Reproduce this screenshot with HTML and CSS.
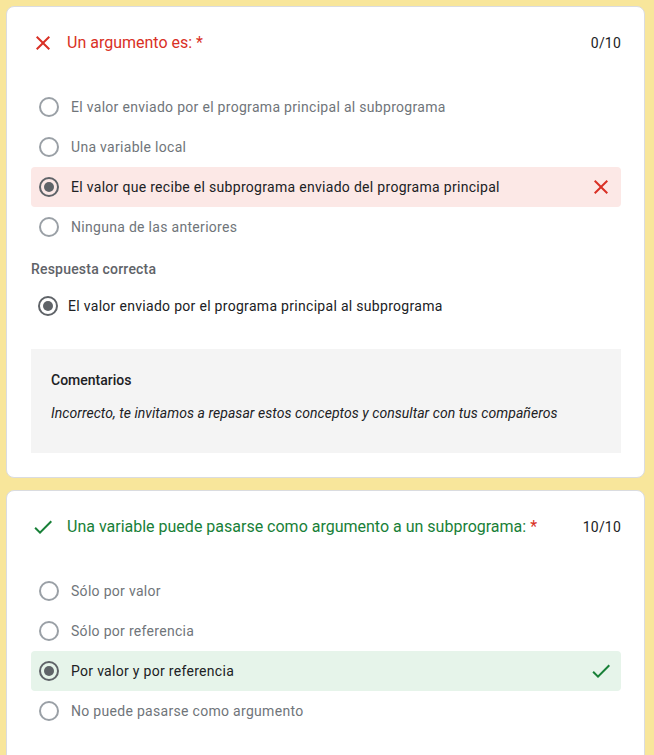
FILE: index.html
```html
<!DOCTYPE html>
<html lang="es">
<head>
<meta charset="utf-8">
<link rel="stylesheet" href="styles.css">
</head>
<body>
<div class="card">
  <div class="q-head">
    <svg class="q-icon" viewBox="0 0 24 24" width="24" height="24"><path fill="#d93025" d="M19 6.41L17.59 5 12 10.59 6.41 5 5 6.41 10.59 12 5 17.59 6.41 19 12 13.41 17.59 19 19 17.59 13.41 12z"/></svg>
    <div class="q-title wrong">Un argumento es: <span class="req">*</span></div>
    <div class="score">0/10</div>
  </div>
  <div class="options">
    <div class="opt"><span class="radio"></span><span class="label">El valor enviado por el programa principal al subprograma</span></div>
    <div class="opt"><span class="radio"></span><span class="label">Una variable local</span></div>
    <div class="opt sel bad"><span class="radio on"></span><span class="label">El valor que recibe el subprograma enviado del programa principal</span>
      <svg class="mark" viewBox="0 0 24 24" width="24" height="24"><path fill="#d93025" d="M19 6.41L17.59 5 12 10.59 6.41 5 5 6.41 10.59 12 5 17.59 6.41 19 12 13.41 17.59 19 19 17.59 13.41 12z"/></svg></div>
    <div class="opt"><span class="radio"></span><span class="label">Ninguna de las anteriores</span></div>
  </div>
  <div class="correct-label">Respuesta correcta</div>
  <div class="opt answer"><span class="radio on"></span><span class="label">El valor enviado por el programa principal al subprograma</span></div>
  <div class="feedback">
    <div class="fb-title">Comentarios</div>
    <div class="fb-text">Incorrecto, te invitamos a repasar estos conceptos y consultar con tus compañeros</div>
  </div>
</div>

<div class="card">
  <div class="q-head">
    <svg class="q-icon" viewBox="0 0 24 24" width="24" height="24"><path fill="#188038" d="M9 16.17L4.83 12l-1.42 1.41L9 19 21 7l-1.41-1.41z"/></svg>
    <div class="q-title right">Una variable puede pasarse como argumento a un subprograma: <span class="req">*</span></div>
    <div class="score">10/10</div>
  </div>
  <div class="options">
    <div class="opt"><span class="radio"></span><span class="label">Sólo por valor</span></div>
    <div class="opt"><span class="radio"></span><span class="label">Sólo por referencia</span></div>
    <div class="opt sel good"><span class="radio on"></span><span class="label">Por valor y por referencia</span>
      <svg class="mark" viewBox="0 0 24 24" width="24" height="24"><path fill="#188038" d="M9 16.17L4.83 12l-1.42 1.41L9 19 21 7l-1.41-1.41z"/></svg></div>
    <div class="opt"><span class="radio"></span><span class="label">No puede pasarse como argumento</span></div>
  </div>
  <div class="spacer"></div>
</div>
</body>
</html>
```
FILE: styles.css
```css
* { box-sizing: border-box; }
html, body { margin: 0; padding: 0; }
body {
  background: #f8e69b;
  font-family: Roboto, "Liberation Sans", Arial, sans-serif;
  color: #202124;
  padding-top: 6px;
  overflow: hidden;
  height: 755px;
}
.card {
  background: #fff;
  border: 1px solid #dadce0;
  border-radius: 8px;
  margin: 0 9px 12px 6px;
  padding: 24px 23px 24px 24px;
}
.q-head {
  display: flex;
  align-items: center;
  height: 24px;
}
.q-icon { flex: none; display: block; }
.q-title {
  flex: 1;
  margin-left: 12px;
  font-size: 16px;
  letter-spacing: 0;
  line-height: 24px;
}
.q-title.wrong { color: #d93025; }
.q-title.right { color: #188038; }
.req { color: #d93025; }
.score {
  font-size: 14px;
  color: #202124;
  letter-spacing: 0.2px;
}
.options { margin-top: 32px; }
.opt {
  display: flex;
  align-items: center;
  height: 40px;
  padding-left: 8px;
  padding-right: 8px;
  border-radius: 4px;
}
.radio {
  flex: none;
  width: 20px;
  height: 20px;
  border: 2px solid #9aa0a6;
  border-radius: 50%;
  display: flex;
  align-items: center;
  justify-content: center;
}
.radio.on { border-color: #5f6368; }
.radio.on::after {
  content: "";
  width: 10px;
  height: 10px;
  border-radius: 50%;
  background: #5f6368;
}
.label {
  flex: 1;
  margin-left: 12px;
  font-size: 14px;
  letter-spacing: 0.3px;
  color: #70757a;
}
.opt.sel .label { color: #202124; }
.opt.bad { background: #fce8e6; }
.opt.good { background: #e6f4ea; }
.mark { flex: none; display: block; }
.correct-label {
  margin-top: 12px;
  font-size: 14px;
  font-weight: 500;
  line-height: 20px;
  color: #5f6368;
  letter-spacing: 0.2px;
}
.opt.answer {
  margin-top: 7px;
  padding-left: 7px;
}
.opt.answer .label { color: #202124; margin-left: 10px; }
.feedback {
  margin-top: 23px;
  background: #f4f4f4;
  padding: 21px 20px 30px 20px;
}
.fb-title {
  font-size: 14px;
  font-weight: 500;
  line-height: 20px;
  color: #202124;
}
.fb-text {
  margin-top: 13px;
  font-size: 14px;
  font-style: italic;
  line-height: 20px;
  letter-spacing: 0.05px;
  color: #202124;
}
.spacer { height: 60px; }
```
